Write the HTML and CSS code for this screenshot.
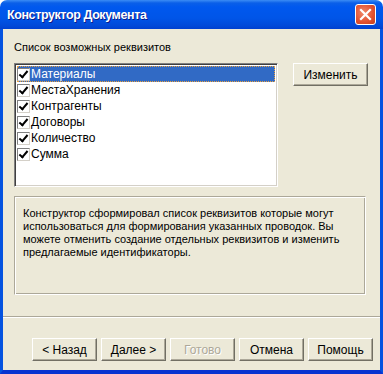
FILE: index.html
```html
<!DOCTYPE html>
<html lang="ru">
<head>
    <meta charset="UTF-8">
    <title>Конструктор Документа</title>
    <link rel="stylesheet" href="styles.css">
</head>
<body>
    <div class="window">
        <div class="titlebar">
            <span class="title">Конструктор Документа</span>
            <span class="close-btn">
                <svg width="13" height="13" viewBox="0 0 13 13">
                    <path d="M2 2 L11 11 M11 2 L2 11" stroke="#fff" stroke-width="2.2" stroke-linecap="square"/>
                </svg>
            </span>
        </div>
        <div class="client">
            <div class="main">
                <div class="label">Список возможных реквизитов</div>
                <div class="list-row">
                    <div class="listbox">
                        <div class="item selected"><span class="check"></span><span class="item-text">Материалы</span></div>
                        <div class="item"><span class="check"></span><span class="item-text">МестаХранения</span></div>
                        <div class="item"><span class="check"></span><span class="item-text">Контрагенты</span></div>
                        <div class="item"><span class="check"></span><span class="item-text">Договоры</span></div>
                        <div class="item"><span class="check"></span><span class="item-text">Количество</span></div>
                        <div class="item"><span class="check"></span><span class="item-text">Сумма</span></div>
                    </div>
                    <button class="btn">Изменить</button>
                </div>
                <div class="info">
                    Конструктор сформировал список реквизитов которые могут<br>
                    использоваться для формирования указанных проводок. Вы<br>
                    можете отменить создание отдельных реквизитов и изменить<br>
                    предлагаемые идентификаторы.
                </div>
            </div>
            <div class="separator"></div>
            <div class="footer">
                <button class="btn">&lt; Назад</button>
                <button class="btn">Далее &gt;</button>
                <button class="btn disabled">Готово</button>
                <button class="btn">Отмена</button>
                <button class="btn">Помощь</button>
            </div>
        </div>
    </div>
</body>
</html>
```

FILE: styles.css
```css
body {
    margin: 0;
    padding: 0;
    background: #fff;
    font-family: "Liberation Sans", Arial, sans-serif;
    font-size: 11px;
    color: #000;
}

.window {
    width: 383px;
    height: 374px;
    display: flex;
    flex-direction: column;
}

/* XP blue caption */
.titlebar {
    height: 29px;
    box-sizing: border-box;
    display: flex;
    align-items: center;
    justify-content: space-between;
    padding: 0 7px 0 7px;
    border-radius: 7px 7px 0 0;
    background: linear-gradient(#3b8cf5 0, #0a5fe8 3px, #0058ee 7px, #0055e8 18px, #0149d8 26px, #0040d0 29px);
}

.title {
    color: #fff;
    font-family: "Liberation Sans", Arial, sans-serif;
    font-weight: bold;
    font-size: 12.5px;
    letter-spacing: -0.4px;
    text-shadow: 1px 1px #0f1d8a;
    padding-top: 1px;
}

.close-btn {
    width: 21px;
    height: 21px;
    box-sizing: border-box;
    border: 1px solid #fff;
    border-radius: 3px;
    background: radial-gradient(circle at 40% 40%, #f08a6c, #e2502f 60%, #c3401e);
    display: flex;
    align-items: center;
    justify-content: center;
}

.client {
    flex: 1;
    background: #ece9d8;
    border-left: 3px solid #0553e0;
    border-right: 3px solid #0553e0;
    border-bottom: 4px solid #0833d0;
    display: flex;
    flex-direction: column;
}

.main {
    padding: 11px 11px 0 11px;
}

.label {
    height: 14px;
    line-height: 14px;
    margin-bottom: 9px;
}

.list-row {
    display: flex;
    gap: 15px;
    align-items: flex-start;
}

.listbox {
    width: 264px;
    height: 124px;
    box-sizing: border-box;
    background: #fff;
    border-top: 1px solid #808080;
    border-left: 1px solid #808080;
    border-bottom: 1px solid #fff;
    border-right: 1px solid #fff;
    box-shadow: inset 1px 1px #404040, inset -1px -1px #d4d0c8;
    padding: 2px 2px 0 2px;
}

.item {
    height: 16px;
    display: flex;
    align-items: center;
    box-sizing: border-box;
}

.item.selected {
    background: #316ac5;
    color: #fff;
    outline: 1px dotted #e8a040;
    outline-offset: -1px;
}

.check {
    width: 13px;
    height: 13px;
    box-sizing: border-box;
    border: 1px solid #808080;
    border-right-color: #d4d0c8;
    border-bottom-color: #d4d0c8;
    background: #fff;
    position: relative;
    margin-right: 1px;
}

.check::after {
    content: "";
    position: absolute;
    left: 3px;
    top: 0px;
    width: 3px;
    height: 7px;
    border-right: 2px solid #000;
    border-bottom: 2px solid #000;
    transform: rotate(40deg);
}

.item-text {
    font-size: 12px;
    line-height: 16px;
}

.btn {
    width: 75px;
    height: 23px;
    box-sizing: border-box;
    background: #ece9d8;
    border-top: 1px solid #fff;
    border-left: 1px solid #fff;
    border-right: 1px solid #716f64;
    border-bottom: 1px solid #716f64;
    box-shadow: inset -1px -1px #aca899;
    font-family: "Liberation Sans", Arial, sans-serif;
    font-size: 12px;
    color: #000;
    padding: 0;
}

.btn.disabled {
    color: #aca899;
    text-shadow: 1px 1px #fff;
}

.info {
    margin-top: 9px;
    width: 352px;
    height: 99px;
    box-sizing: border-box;
    border-top: 1px solid #aca899;
    border-left: 1px solid #aca899;
    border-right: 1px solid #fff;
    border-bottom: 1px solid #fff;
    box-shadow: inset 1px 1px #fff, inset -1px -1px #aca899;
    padding: 10px 4px 0 8px;
    font-size: 11px;
    line-height: 13px;
    white-space: nowrap;
}

.separator {
    margin-top: 21px;
    height: 1px;
    background: #aca899;
    border-bottom: 1px solid #fff;
}

.footer {
    display: flex;
    justify-content: flex-end;
    gap: 4px;
    padding: 20px 7px 0 0;
}

.footer .btn {
    width: 65px;
}
```
